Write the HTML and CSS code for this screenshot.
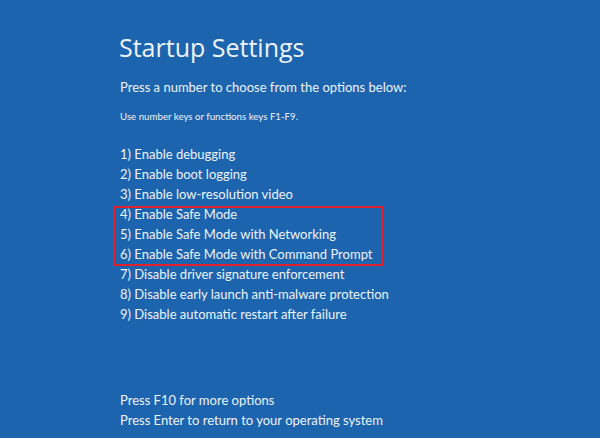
FILE: index.html
```html
<!DOCTYPE html>
<html>
<head>
<meta charset="utf-8">
<link rel="stylesheet" href="styles.css">
</head>
<body>
<main class="screen">
  <h1 class="title">Startup Settings</h1>
  <p class="lead">Press a number to choose from the options below:</p>
  <p class="hint">Use number keys or functions keys F1-F9.</p>
  <ul class="options">
    <li>1) Enable debugging</li>
    <li>2) Enable boot logging</li>
    <li>3) Enable low-resolution video</li>
    <li class="group">
      <ul class="highlight">
        <li>4) Enable Safe Mode</li>
        <li>5) Enable Safe Mode with Networking</li>
        <li>6) Enable Safe Mode with Command Prompt</li>
      </ul>
    </li>
    <li>7) Disable driver signature enforcement</li>
    <li>8) Disable early launch anti-malware protection</li>
    <li>9) Disable automatic restart after failure</li>
  </ul>
  <div class="footer">
    <p>Press F10 for more options</p>
    <p>Press Enter to return to your operating system</p>
  </div>
</main>
</body>
</html>
```
FILE: styles.css
```css
html, body {
  margin: 0;
  padding: 0;
  height: 100%;
}
body {
  background: #1d64ae;
  color: #eef3fa;
  font-family: Lato, "Open Sans", sans-serif;
}
.screen {
  height: 438px;
  box-sizing: border-box;
  padding: 30px 0 0 119px;
  display: flex;
  flex-direction: column;
}
.title {
  margin: 0;
  font-family: "Open Sans", sans-serif;
  font-size: 25px;
  font-weight: 400;
  line-height: 34px;
}
.lead {
  margin: 13px 0 0 1px;
  font-size: 13px;
  line-height: 20px;
}
.hint {
  margin: 12px 0 0 1px;
  font-size: 9.7px;
  line-height: 14px;
}
.options {
  list-style: none;
  margin: 21px 0 0 1px;
  padding: 0;
  font-size: 13px;
  line-height: 20px;
}
.group {
  position: relative;
  width: fit-content;
}
.group::after {
  content: "";
  position: absolute;
  top: 2px;
  bottom: -2px;
  left: -7px;
  right: -10px;
  border: 2px solid #e3212d;
  pointer-events: none;
}
.highlight {
  list-style: none;
  margin: 0;
  padding: 0;
}
.footer {
  margin-top: auto;
  padding: 0 0 8px 1px;
  font-size: 13px;
  line-height: 20px;
}
.footer p {
  margin: 0;
}
```
